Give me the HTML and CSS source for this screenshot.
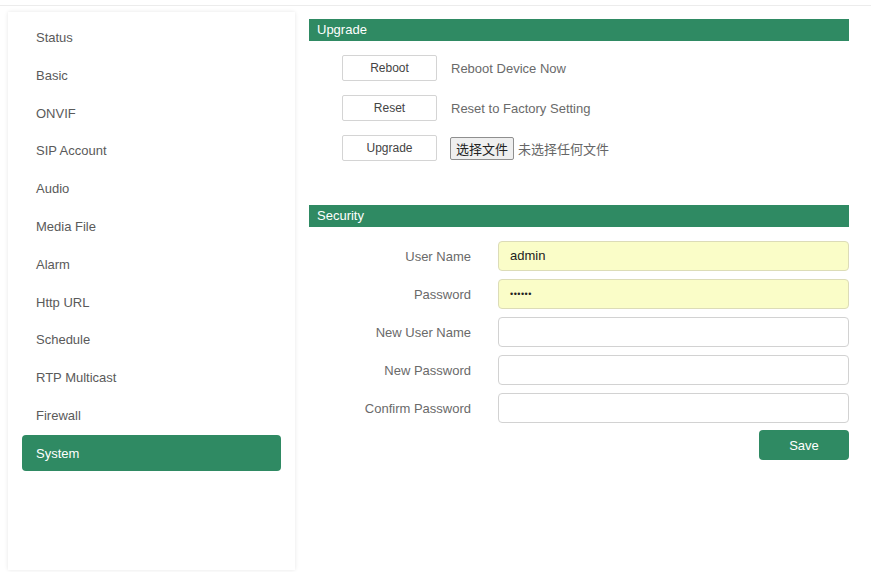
FILE: index.html
```html
<!DOCTYPE html>
<html>
<head>
<meta charset="utf-8">
<link rel="stylesheet" href="styles.css">
</head>
<body>
<div class="page">
  <nav class="sidebar">
    <div class="nav-item">Status</div>
    <div class="nav-item">Basic</div>
    <div class="nav-item">ONVIF</div>
    <div class="nav-item">SIP Account</div>
    <div class="nav-item">Audio</div>
    <div class="nav-item">Media File</div>
    <div class="nav-item">Alarm</div>
    <div class="nav-item">Http URL</div>
    <div class="nav-item">Schedule</div>
    <div class="nav-item">RTP Multicast</div>
    <div class="nav-item">Firewall</div>
    <div class="nav-item active">System</div>
  </nav>
  <main class="content">
    <section class="panel">
      <div class="panel-head">Upgrade</div>
      <div class="actions">
        <div class="action-row">
          <button class="btn-plain">Reboot</button>
          <span class="action-label">Reboot Device Now</span>
        </div>
        <div class="action-row">
          <button class="btn-plain">Reset</button>
          <span class="action-label">Reset to Factory Setting</span>
        </div>
        <div class="action-row">
          <button class="btn-plain">Upgrade</button>
          <span class="file-btn">选择文件</span>
          <span class="file-none">未选择任何文件</span>
        </div>
      </div>
    </section>
    <section class="panel security">
      <div class="panel-head">Security</div>
      <div class="form">
        <div class="form-row">
          <label class="form-label">User Name</label>
          <div class="field filled">admin</div>
        </div>
        <div class="form-row">
          <label class="form-label">Password</label>
          <div class="field filled dots">••••••</div>
        </div>
        <div class="form-row">
          <label class="form-label">New User Name</label>
          <div class="field"></div>
        </div>
        <div class="form-row">
          <label class="form-label">New Password</label>
          <div class="field"></div>
        </div>
        <div class="form-row">
          <label class="form-label">Confirm Password</label>
          <div class="field"></div>
        </div>
        <div class="save-row">
          <button class="btn-save">Save</button>
        </div>
      </div>
    </section>
  </main>
</div>
</body>
</html>
```
FILE: styles.css
```css
html, body {
  margin: 0;
  padding: 0;
  background: #fff;
  font-family: "Liberation Sans", Arial, "Noto Sans CJK SC", sans-serif;
  font-size: 13px;
  color: #555;
}
.page {
  margin-top: 5px;
  border-top: 1px solid #ececec;
  display: flex;
  height: 567px;
  box-sizing: border-box;
}
.sidebar {
  margin: 6px 0 0 8px;
  width: 287px;
  height: 558px;
  box-sizing: border-box;
  padding: 7px 14px 0 14px;
  background: #fff;
  box-shadow: 0 0 4px rgba(0,0,0,0.10);
  display: flex;
  flex-direction: column;
  gap: 1.8px;
}
.nav-item {
  height: 36px;
  line-height: 38px;
  padding-left: 14px;
  color: #5a5a5a;
  font-size: 13px;
  border-radius: 4px;
}
.nav-item.active {
  background: #2f8a63;
  color: #fff;
  line-height: 37px;
}
.content {
  flex: 1;
  padding: 13px 22px 0 14px;
  display: flex;
  flex-direction: column;
}
.panel-head {
  height: 22px;
  line-height: 22px;
  background: #2f8a63;
  color: #fff;
  padding-left: 8px;
  font-size: 13px;
}
.actions {
  padding: 14px 0 0 33px;
  display: flex;
  flex-direction: column;
  gap: 14px;
}
.action-row {
  display: flex;
  align-items: center;
  height: 26px;
}
.btn-plain {
  width: 95px;
  height: 26px;
  background: #fff;
  border: 1px solid #d4d4d4;
  border-radius: 2px;
  font-family: "Liberation Sans", Arial, sans-serif;
  font-size: 12px;
  color: #444;
  padding: 0;
  margin-right: 14px;
}
.action-label {
  color: #6a6a6a;
  font-size: 13px;
}
.file-btn {
  margin-left: -1px;
  height: 21px;
  line-height: 21px;
  padding: 0 5px;
  background: #efefef;
  border: 1px solid #8f8f8f;
  border-radius: 2px;
  color: #222;
  font-family: "Noto Sans CJK SC", sans-serif;
  font-size: 13px;
}
.file-none {
  margin-left: 4px;
  color: #666;
  font-family: "Noto Sans CJK SC", sans-serif;
  font-size: 13px;
}
.security {
  margin-top: 44px;
}
.form {
  padding-top: 14px;
  display: flex;
  flex-direction: column;
  gap: 8px;
}
.form-row {
  display: flex;
  align-items: center;
  height: 30px;
}
.form-label {
  width: 162px;
  text-align: right;
  color: #6a6a6a;
  font-size: 13px;
  margin-right: 27px;
}
.field {
  flex: 1;
  height: 30px;
  box-sizing: border-box;
  border: 1px solid #d2d2d2;
  border-radius: 4px;
  background: #fff;
  padding-left: 11px;
  line-height: 28px;
  color: #222;
  font-size: 13px;
}
.field.filled {
  background: #fafdc8;
  border-color: #dcdcb8;
}
.field.dots {
  font-size: 9px;
  letter-spacing: 0.5px;
}
.save-row {
  display: flex;
  justify-content: flex-end;
  margin-top: -1px;
}
.btn-save {
  width: 90px;
  height: 30px;
  background: #2f8a63;
  color: #fff;
  border: none;
  border-radius: 4px;
  font-family: "Liberation Sans", Arial, sans-serif;
  font-size: 13px;
}
```
